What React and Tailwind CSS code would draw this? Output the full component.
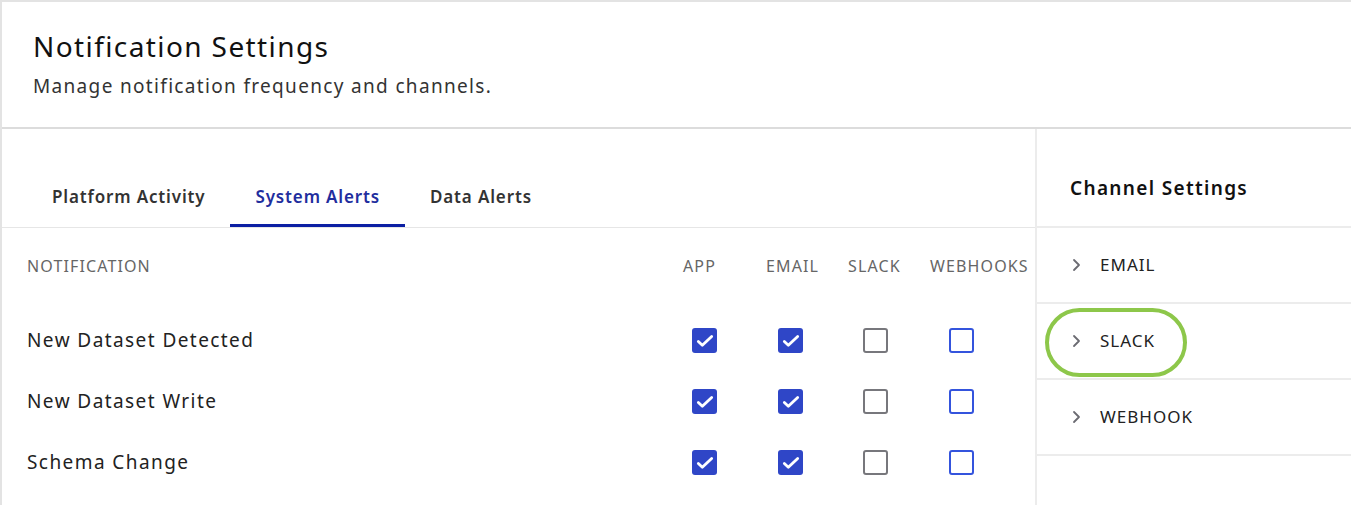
import React from 'react';

const FONT = { fontFamily: '"Noto Sans", "Open Sans", sans-serif' };

const columns = [
  { label: 'APP', box: 'ml-[9px]', kind: 'checked' },
  { label: 'EMAIL', box: 'ml-[12px]', kind: 'checked' },
  { label: 'SLACK', box: 'ml-[15px]', kind: 'gray' },
  { label: 'WEBHOOKS', box: 'ml-[19px]', kind: 'blue' },
];

const rows = ['New Dataset Detected', 'New Dataset Write', 'Schema Change'];

const channels = ['EMAIL', 'SLACK', 'WEBHOOK'];

const Checkbox = ({ kind }) => {
  if (kind === 'checked') {
    return (
      <div className="w-[25px] h-[25px] rounded-[3px] bg-[#2f46c7] flex items-center justify-center">
        <svg width="20" height="20" viewBox="0 0 24 24" fill="none" stroke="white" strokeWidth="3.4" strokeLinecap="round" strokeLinejoin="round">
          <path d="M4 12.5l4.8 4.5L20 6.5" />
        </svg>
      </div>
    );
  }
  if (kind === 'gray') {
    return <div className="w-[25px] h-[25px] rounded-[3px] border-2 border-[#77777c] bg-white" />;
  }
  return <div className="w-[25px] h-[25px] rounded-[3px] border-2 border-[#3454dd] bg-white" />;
};

const Chevron = () => (
  <svg width="12" height="14" viewBox="0 0 12 14" fill="none" stroke="#6b6b72" strokeWidth="1.8" strokeLinecap="round" strokeLinejoin="round">
    <path d="M3 2l5 5-5 5" />
  </svg>
);

export default function App() {
  return (
    <div style={FONT} className="w-[1351px] h-[505px] overflow-hidden bg-white border-t-2 border-l-2 border-[#e3e3e3] flex flex-col">
      {/* Header */}
      <div className="h-[127px] shrink-0 pl-[31px] pt-[25px] border-b-2 border-[#dcdcdc]">
        <h1 className="text-[28px] leading-[38px] tracking-[0.05em] text-[#111]">Notification Settings</h1>
        <p className="text-[19px] leading-[26px] mt-[8px] tracking-[0.07em] text-[#333]">Manage notification frequency and channels.</p>
      </div>

      <div className="flex flex-1 min-h-0">
        {/* Left panel */}
        <div className="w-[1035px] shrink-0 border-r-2 border-[#ececec]">
          <div className="h-[99px] flex items-end pl-[25px] border-b border-[#e6e6e6]">
            <div className="flex text-[17px] font-semibold tracking-[0.05em]">
              <div className="px-[25px] h-[60px] flex items-center text-[#333]">Platform Activity</div>
              <div className="px-[25px] h-[60px] flex items-center text-[#1f2e9e] border-b-[3px] border-[#0b1fa3] pt-[3px]">System Alerts</div>
              <div className="px-[25px] h-[60px] flex items-center text-[#333]">Data Alerts</div>
            </div>
          </div>

          <div className="grid grid-cols-[681px_83px_82px_82px_107px] h-[76px] items-center text-[16px] tracking-[0.07em] text-[#666]">
            <div className="pl-[25px]">NOTIFICATION</div>
            {columns.map((c) => (
              <div key={c.label}>{c.label}</div>
            ))}
          </div>

          <div className="pt-[6px]">
            {rows.map((r) => (
              <div key={r} className="grid grid-cols-[681px_83px_82px_82px_107px] h-[61px] items-center">
                <div className="pl-[25px] text-[19px] tracking-[0.075em] text-[#222]">{r}</div>
                {columns.map((c) => (
                  <div key={c.label} className={c.box}>
                    <Checkbox kind={c.kind} />
                  </div>
                ))}
              </div>
            ))}
          </div>
        </div>

        {/* Right panel */}
        <div className="flex-1">
          <div className="h-[99px] flex items-center pl-[33px] pt-[22px] border-b-2 border-[#ececec]">
            <h2 className="text-[19px] font-semibold tracking-[0.07em] text-[#111]">Channel Settings</h2>
          </div>
          {channels.map((ch) => (
            <div key={ch} className="relative h-[76px] flex items-center pl-[34px] border-b-2 border-[#ececec]">
              <Chevron />
              <span className="ml-[17px] text-[17px] tracking-[0.06em] text-[#222]">{ch}</span>
              {ch === 'SLACK' && (
                <div className="absolute left-[8px] top-[4px] w-[142px] h-[69px] rounded-[35px] border-4 border-[#8dc74a]" />
              )}
            </div>
          ))}
        </div>
      </div>
    </div>
  );
}
